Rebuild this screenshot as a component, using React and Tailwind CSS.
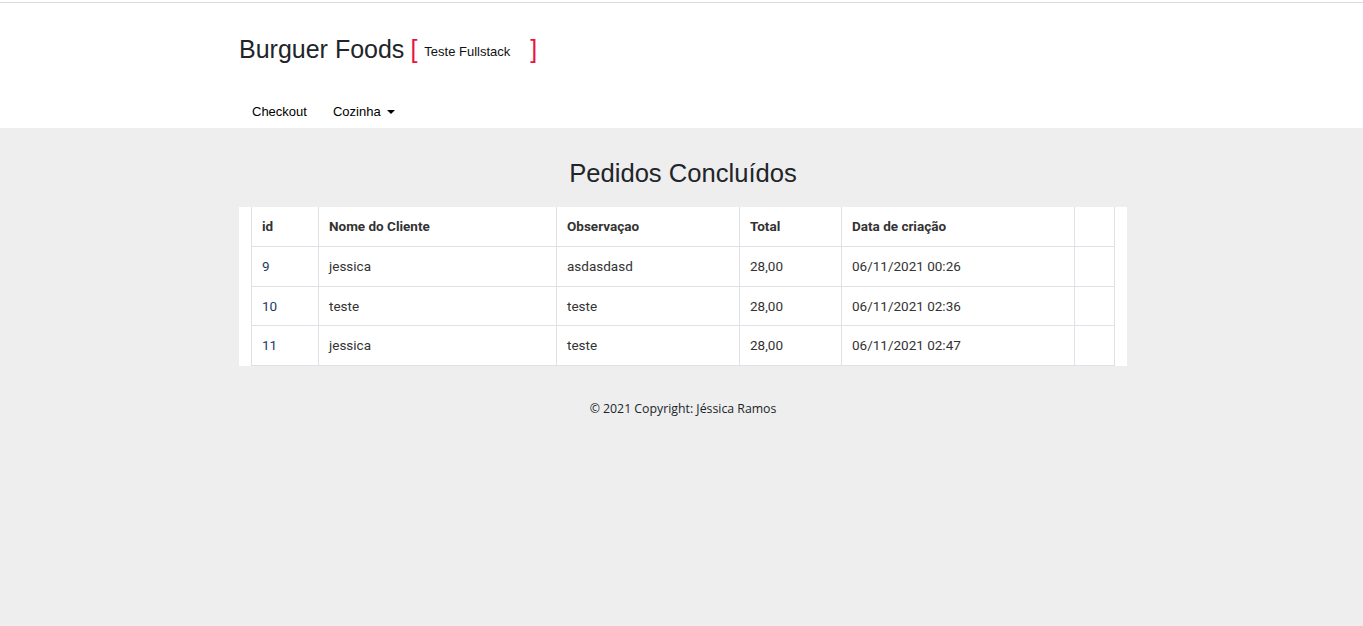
export default function App() {
  const rows = [
    ["9", "jessica", "asdasdasd", "28,00", "06/11/2021 00:26"],
    ["10", "teste", "teste", "28,00", "06/11/2021 02:36"],
    ["11", "jessica", "teste", "28,00", "06/11/2021 02:47"],
  ];
  const widths = ["w-[67px]", "w-[238px]", "w-[183px]", "w-[102px]", "w-[233px]", "w-[40px]"];
  const headers = ["id", "Nome do Cliente", "Observaçao", "Total", "Data de criação", ""];
  return (
    <div className="min-h-[626px] bg-[#eeeeee] font-['Liberation_Sans',Arial,sans-serif] text-[#212529]">
      <header className="bg-white pt-[2px]">
        <div className="h-px bg-[#dcdcdc]" />
        <div className="w-[888px] ml-[239px]">
          <div className="flex items-center h-[94px] pb-[2px]">
            <span className="text-[25px] leading-none text-[#212529]">Burguer Foods</span>
            <span className="ml-[6px] text-[25px] leading-none text-[#e8133f]">[</span>
            <span className="ml-[7px] mt-[5px] text-[13px] text-[#111]">Teste Fullstack</span>
            <span className="ml-[20px] text-[25px] leading-none text-[#e8133f]">]</span>
          </div>
          <nav className="flex items-center h-[31px] pb-[2px] text-[13px] text-black pl-[13px]">
            <span>Checkout</span>
            <span className="ml-[26px] flex items-center">
              Cozinha
              <span className="ml-[6px] w-0 h-0 border-l-[4px] border-r-[4px] border-t-[4px] border-l-transparent border-r-transparent border-t-black" />
            </span>
          </nav>
        </div>
      </header>
      <main className="w-[888px] ml-[239px]">
        <h1 className="text-center text-[25.6px] leading-none pt-[33px] pb-[20px] text-[#212529]">Pedidos Concluídos</h1>
        <div className="bg-white px-[12px]">
          <table className="border-collapse font-['Roboto',sans-serif] text-[13.5px] text-[#212529] table-fixed">
            <thead>
              <tr className="h-[40px]">
                {headers.map((h, i) => (
                  <th key={i} className={`${widths[i]} border border-[#dee2e6] border-t-0 text-left font-bold px-[10px] text-[#333]`}>{h}</th>
                ))}
              </tr>
            </thead>
            <tbody>
              {rows.map((r, ri) => (
                <tr key={ri} className="h-[39.5px]">
                  {[...r, ""].map((c, ci) => (
                    <td key={ci} className={`border border-[#dee2e6] px-[10px] ${ci === 0 ? "text-[#1f3a5f]" : "text-[#333]"}`}>{c}</td>
                  ))}
                </tr>
              ))}
            </tbody>
          </table>
        </div>
        <footer className="text-center pt-[34px] text-[12.3px] font-['Open_Sans',sans-serif] text-[#212529]">
          © 2021 Copyright: Jéssica Ramos
        </footer>
      </main>
    </div>
  );
}
